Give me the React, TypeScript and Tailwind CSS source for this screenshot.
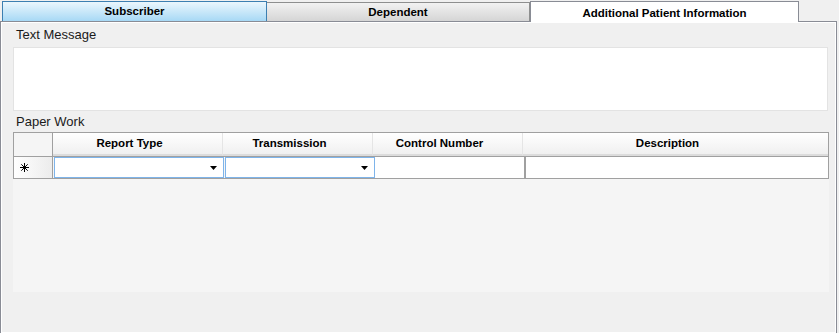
import React from "react";

const columns = [
  { label: "Report Type", width: "w-[170px]", combo: true },
  { label: "Transmission", width: "w-[150px]", combo: true },
  { label: "Control Number", width: "w-[150px]", combo: false },
  { label: "Description", width: "flex-1", combo: false },
];

function Arrow() {
  return (
    <svg width="8" height="4" viewBox="0 0 8 4" className="shrink-0">
      <path d="M0 0h7L3.5 4z" fill="#000" />
    </svg>
  );
}

function NewRowStar() {
  return (
    <svg width="9" height="9" viewBox="0 0 9 9" className="shrink-0">
      <path
        d="M4.5 0v9M0 4.5h9M1.3 1.3l6.4 6.4M7.7 1.3l-6.4 6.4"
        stroke="#000"
        strokeWidth="1"
        fill="none"
      />
    </svg>
  );
}

export default function App() {
  return (
    <div
      className="h-[333px] w-[839px] overflow-hidden bg-[#f0f0f0] text-black"
      style={{ fontFamily: "'Liberation Sans', Arial, sans-serif" }}
    >
      {/* tabs */}
      <div className="relative z-10 flex h-[21px] items-end pl-[2px]">
        <div className="flex h-[20px] w-[265px] items-center justify-center border border-b-0 border-[#3c7fb1] bg-gradient-to-b from-[#eaf6fd] to-[#a7d9f5] pt-px text-[11.5px] font-bold">
          Subscriber
        </div>
        <div className="flex h-[19px] w-[263px] items-center justify-center border border-b-0 border-l-0 border-[#8e8f8f] bg-gradient-to-b from-[#f2f2f2] to-[#d5d5d5] pt-px text-[11.5px] font-bold">
          Dependent
        </div>
        <div className="-mb-px flex h-[21px] w-[269px] items-start justify-center border border-b-0 border-[#898c95] bg-white pt-[3px] text-[11.5px] font-bold">
          Additional Patient Information
        </div>
      </div>

      {/* panel */}
      <div className="h-[313px] w-[837px] border border-[#898c95]">
        <div className="flex h-full flex-col border border-white bg-[#f0f0f0] px-[11px]">
          <div className="pl-[3px] pt-[4px] text-[13px] leading-[16px] text-[#1a1a1a]">Text Message</div>
          <div className="mt-[4px] h-[64px] w-[815px] border border-[#e3e3e3] bg-white" />
          <div className="pl-[3px] pt-[3px] text-[13px] leading-[16px] text-[#1a1a1a]">Paper Work</div>

          <div className="mt-[2px] flex h-[160px] w-[816px] flex-col bg-[#f5f5f5]">
            {/* header */}
            <div className="flex h-[24px] border border-b-0 border-[#a0a0a0]">
              <div className="w-[39px] border-r border-[#a0a0a0] bg-[#f5f5f5]" />
              {columns.map((c, i) => (
                <div
                  key={c.label}
                  className={`${c.width} flex items-center justify-center border-b-2 border-[#dcdcdc] bg-gradient-to-b from-white to-[#f0f0f0] pr-[16px] text-[11.5px] font-bold ${
                    i < columns.length - 1 ? "border-r border-r-[#e5e5e5]" : ""
                  }`}
                >
                  {c.label}
                </div>
              ))}
            </div>
            {/* new row */}
            <div className="flex h-[23px] border border-[#a0a0a0]">
              <div className="flex w-[39px] items-center border-r border-[#a0a0a0] bg-gradient-to-r from-white to-[#ececec] pl-[6px]">
                <NewRowStar />
              </div>
              {columns.map((c, i) =>
                c.combo ? (
                  <div
                    key={c.label}
                    className={`${c.width} ml-px flex items-center justify-end border border-[#7eb4ea] bg-white pr-[5px]`}
                  >
                    <Arrow />
                  </div>
                ) : (
                  <div
                    key={c.label}
                    className={`${c.width} bg-white ${i < columns.length - 1 ? "border-r border-[#a0a0a0]" : "border-l border-[#a0a0a0]"}`}
                  />
                )
              )}
            </div>
          </div>
        </div>
      </div>
    </div>
  );
}
